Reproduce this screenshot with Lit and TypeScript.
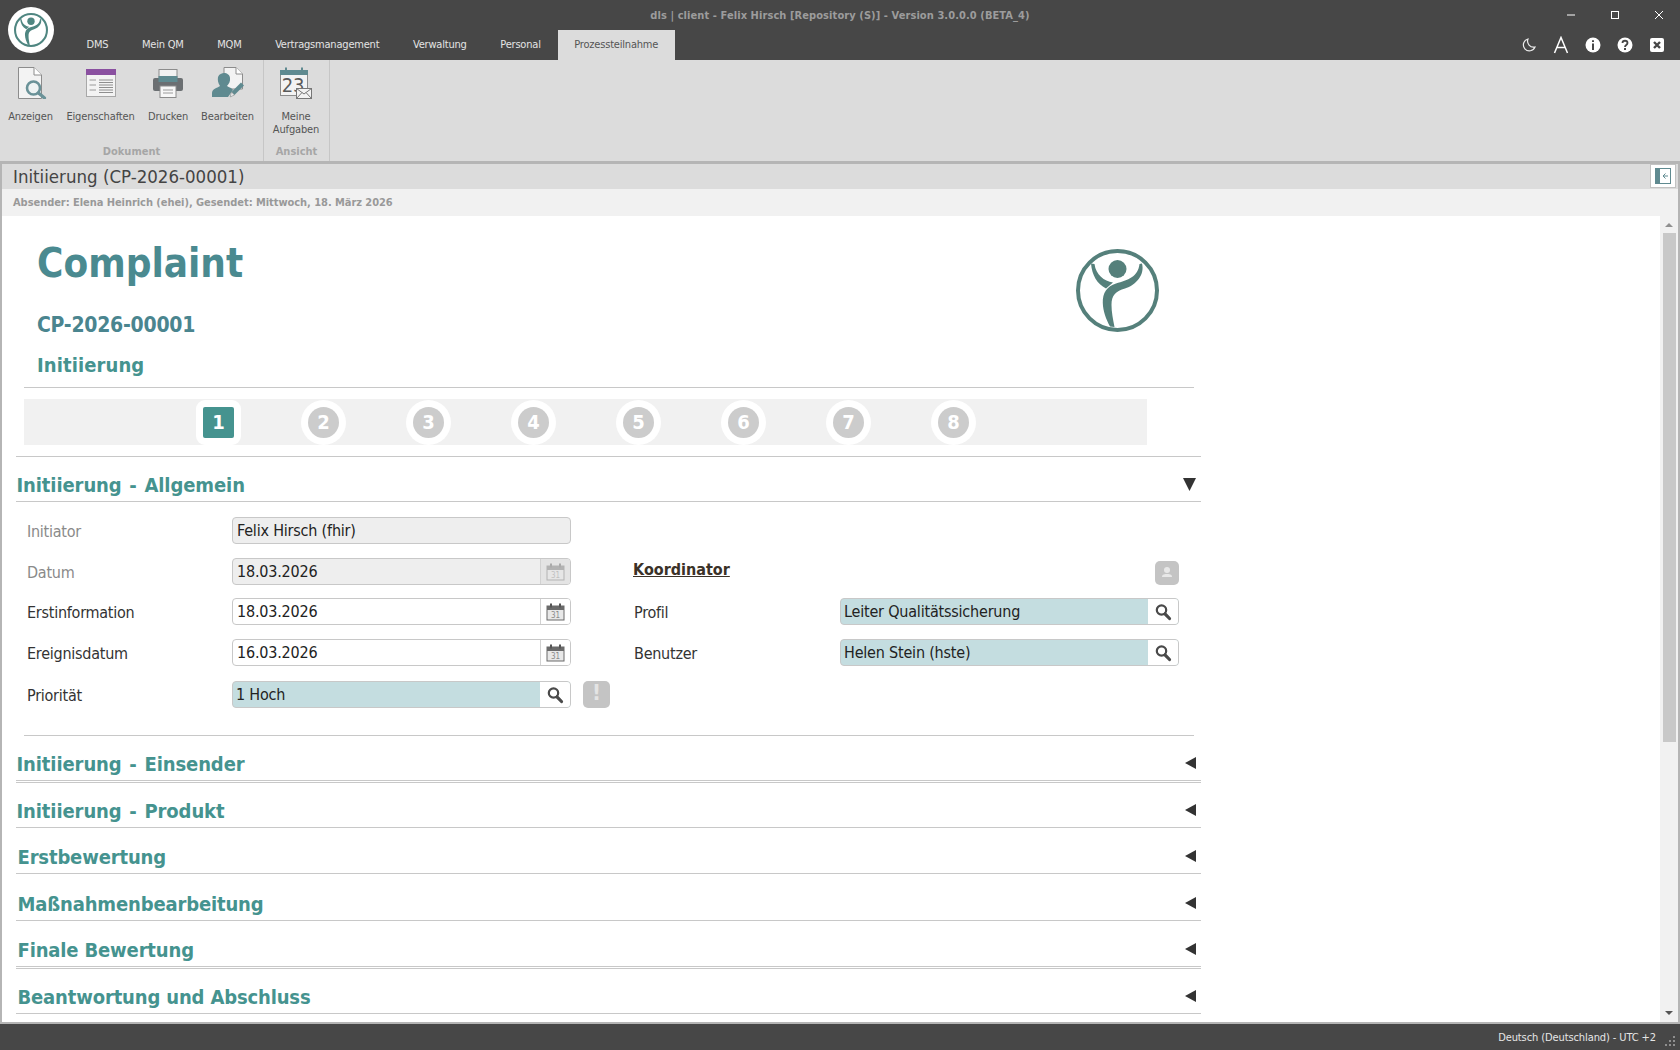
import { LitElement, html, css } from 'lit';
import { customElement } from 'lit/decorators.js';

const logoShape = (ring: string, stroke = 4) => html`
  <svg viewBox="0 0 83 83" width="100%" height="100%">
    <circle cx="41.5" cy="41.5" r="${39.5 - (stroke - 4) / 2}" fill="none" stroke=${ring} stroke-width=${stroke}></circle>
    <circle cx="41.5" cy="20" r="9" fill=${ring}></circle>
    <path fill=${ring} d="M15 14.5C16 26 21 35 30 39.5L37 33.5C28 32 20 26 18.5 15Z"></path>
    <path fill=${ring} d="M66 14.5C69 26 60 36 49 39.5C40 42 35.5 46 35.5 56C35.5 63 37 70 38.5 78L34 77.5C30 70 27 62 26.8 54C26.5 44 31 37 40 34.5C52 31 62 28 63.5 15Z"></path>
  </svg>
`;

const searchIcon = html`
  <svg viewBox="0 0 18 18" width="18" height="18">
    <circle cx="7.5" cy="7" r="4.7" fill="#fff" stroke="#4a4a4a" stroke-width="2.2"></circle>
    <path d="M11 10.8L15.5 15.5" stroke="#4a4a4a" stroke-width="3.2" stroke-linecap="round"></path>
  </svg>
`;

const calIcon = html`
  <svg viewBox="0 0 19 18" width="19" height="18">
    <rect x="1" y="3" width="17" height="14" fill="#e8e8e8" stroke="#6a6a6a"></rect>
    <rect x="1" y="3" width="17" height="4" fill="#6a6a6a"></rect>
    <rect x="4" y="0.5" width="2" height="4" fill="#555"></rect>
    <rect x="13" y="0.5" width="2" height="4" fill="#555"></rect>
    <text x="9.5" y="15" font-size="8" text-anchor="middle" fill="#8a8a8a" font-family="DejaVu Sans Condensed, DejaVu Sans, sans-serif">31</text>
  </svg>
`;

const triLeft = html`<svg viewBox="0 0 11 12" width="11" height="12"><path d="M11 0V12L0 6Z" fill="#333"></path></svg>`;
const triDown = html`<svg class="down" viewBox="0 0 13 13" width="13" height="13"><path d="M0 0H13L6.5 13Z" fill="#333"></path></svg>`;

const ribbonIcons: Record<string, unknown> = {
  view: html`
    <svg viewBox="0 0 32 32" width="32" height="32">
      <path d="M3.5 .5H19L26.5 8V31.5H3.5Z" fill="#f3f3f3" stroke="#8c8c8c"></path>
      <path d="M19 .5V8H26.5" fill="#fff" stroke="#8c8c8c"></path>
      <circle cx="18.500" cy="21" r="6.500" fill="#eef3f3" stroke="#6a9298" stroke-width="2.600"></circle>
      <path d="M23.500 26L29.500 31" stroke="#6a9298" stroke-width="3.200" stroke-linecap="round"></path>
    </svg>`,
  props: html`
    <svg viewBox="0 0 32 32" width="32" height="32">
      <rect x="1.5" y="2.5" width="29" height="27" fill="#f3f3f3" stroke="#a8a8a8"></rect>
      <rect x="1" y="2" width="30" height="6" fill="#8a50a0"></rect>
      <path d="M4.5 13H11M4.5 18H11M4.5 23H11" stroke="#9a9a9a"></path>
      <path d="M14 13H28M14 15.5H28M14 18H28M14 20.5H28M14 23H28M14 25.5H28" stroke="#8e8e8e"></path>
    </svg>`,
  print: html`
    <svg viewBox="0 0 32 32" width="32" height="32">
      <rect x="7" y="2.5" width="18" height="10" fill="#f2f2f2" stroke="#8c8c8c"></rect>
      <path d="M3 11H29Q31 11 31 13V22Q31 24 29 24H3Q1 24 1 22V13Q1 11 3 11Z" fill="#6b6f72"></path>
      <rect x="6.5" y="9" width="19" height="6" fill="#5f8a90"></rect>
      <rect x="8" y="19" width="16" height="11.5" fill="#f7f7f7" stroke="#8c8c8c"></rect>
      <path d="M11 23H21M11 26H21" stroke="#9a9a9a"></path>
    </svg>`,
  edit: html`
    <svg viewBox="0 0 34 32" width="34" height="32">
      <path d="M13 .5H25L31.5 7V22H13Z" fill="#f3f3f3" stroke="#8c8c8c"></path>
      <path d="M25 .5V7H31.5" fill="#fff" stroke="#8c8c8c"></path>
      <path d="M1 30V26C1 22 6 21 9 19C7 16 6.5 13 7 10C8 7 11 6 13 6C16 6 19 8 19 11C19.500 14 18 17 16 19C18 20.500 21 21 22 23L17 30Z" fill="#5f8a90"></path>
      <path d="M19 30L20.500 25L30 15.500L33 18.500L23.500 28Z" fill="#5f8a90"></path>
      <path d="M19 30L20.500 25L23.500 28Z" fill="#e8e8e8" stroke="#8c8c8c" stroke-width=".5"></path>
    </svg>`,
  tasks: html`
    <svg viewBox="0 0 32 32" width="32" height="32">
      <rect x=".5" y="3.500" width="27" height="25" fill="#f3f3f3" stroke="#8c8c8c"></rect>
      <rect x="0" y="3" width="28" height="5" fill="#5f8a90"></rect>
      <rect x="5" y=".5" width="2" height="5" fill="#5f8a90"></rect>
      <rect x="21" y=".5" width="2" height="5" fill="#5f8a90"></rect>
      <text x="13" y="25" font-size="20" text-anchor="middle" fill="#5a5a5a" font-family="DejaVu Sans Condensed, DejaVu Sans, sans-serif">23</text>
      <rect x="16.500" y="21.500" width="15" height="10" fill="#f3f3f3" stroke="#777"></rect>
      <path d="M16.500 21.500L24 27L31.500 21.500M16.500 31.500L22 25.500M31.500 31.500L26 25.500" fill="none" stroke="#777"></path>
    </svg>`,
};

@customElement('app-root')
export class AppRoot extends LitElement {
  static styles = css`
    :host {
      display: flex;
      flex-direction: column;
      width: 1680px;
      height: 1050px;
      overflow: hidden;
      background: #474747;
      font-family: 'DejaVu Sans Condensed', 'DejaVu Sans', sans-serif;
      font-stretch: condensed;
      color: #333;
    }

    /* title bar and tabs */
    .top {
      position: relative;
      height: 60px;
      flex: none;
      background: #474747;
    }
    .logo {
      position: absolute;
      left: 8px;
      top: 7px;
      width: 46px;
      height: 46px;
      padding: 6px;
      box-sizing: border-box;
      border-radius: 50%;
      background: #fff;
    }
    .title-row {
      height: 30px;
      display: grid;
      grid-template-columns: 1fr auto 1fr;
      align-items: center;
    }
    .title {
      grid-column: 2;
      font-size: 11px;
      font-weight: 700;
      color: #9c9c9c;
      letter-spacing: 0.08px;
    }
    .win-ctl {
      grid-column: 3;
      justify-self: end;
      display: flex;
      gap: 28px;
      padding-right: 13px;
    }
    .tab-row {
      height: 30px;
      display: flex;
      justify-content: space-between;
    }
    .tabs {
      display: flex;
      padding-left: 69.7px;
    }
    .tab {
      padding: 0 16.8px;
      font-size: 11px;
      line-height: 30px;
      letter-spacing: -0.2px;
      color: #e4e4e4;
    }
    .tab.active {
      background: #dcdcdc;
      color: #555;
    }
    .tools {
      display: flex;
      gap: 14px;
      padding-right: 14px;
      align-items: center;
    }

    /* ribbon */
    .ribbon {
      height: 101px;
      flex: none;
      display: flex;
      background: #dcdcdc;
    }
    .group {
      display: flex;
      flex-direction: column;
      border-right: 1px solid #c6c6c6;
    }
    .group-items {
      display: flex;
      padding-top: 7px;
    }
    .rib-item {
      display: flex;
      flex-direction: column;
      align-items: center;
      font-size: 11px;
      line-height: 13px;
      letter-spacing: -0.15px;
      color: #555;
      text-align: center;
    }
    .rib-icon {
      height: 32px;
      margin-bottom: 11px;
    }
    .group-label {
      margin-top: auto;
      padding-bottom: 2px;
      text-align: center;
      font-size: 11px;
      line-height: 14px;
      font-weight: 700;
      color: #a6a6a6;
    }

    /* main window */
    .main {
      flex: none;
      height: 863px;
      display: flex;
      flex-direction: column;
      box-sizing: border-box;
      border: solid #b5b5b5;
      border-width: 3px 2px 2px;
      background: #fff;
    }
    .page-head {
      height: 25px;
      flex: none;
      display: flex;
      justify-content: space-between;
      background: #dcdcdc;
    }
    .page-title {
      padding-left: 11px;
      font-size: 18.5px;
      line-height: 25px;
      color: #444;
    }
    .collapse {
      width: 26px;
      height: 24px;
      box-sizing: border-box;
      margin-right: 2px;
      padding: 3px 4px;
      border: 1px solid #c2c2c2;
      background: #fff;
    }
    .sender {
      height: 27px;
      flex: none;
      padding-left: 11px;
      font-size: 11px;
      font-weight: 700;
      line-height: 27px;
      letter-spacing: -0.05px;
      color: #999;
      background: #f1f1f1;
    }
    .body {
      flex: 1;
      min-height: 0;
      display: flex;
    }
    .doc {
      flex: 1;
      min-width: 0;
      overflow: hidden;
    }
    .scroll {
      width: 18px;
      flex: none;
      display: flex;
      flex-direction: column;
      align-items: center;
      padding-top: 7px;
      box-sizing: border-box;
      background: #f1f1f1;
    }
    .arrow-up {
      border: solid transparent;
      border-width: 0 4px 4px;
      border-bottom-color: #8f8f8f;
    }
    .thumb {
      width: 13px;
      height: 509px;
      margin-top: 6px;
      background: #c8c8c8;
    }
    .arrow-down {
      margin-top: auto;
      margin-bottom: 7px;
      border: solid transparent;
      border-width: 4px 4px 0;
      border-top-color: #555;
    }

    /* document head */
    .doc-head {
      width: 1170px;
      margin-left: 22px;
      padding: 23px 0 9px 13px;
      box-sizing: border-box;
      height: 172px;
      display: flex;
      justify-content: space-between;
      border-bottom: 1px solid #c8c8c8;
    }
    .doc-title {
      font-size: 40px;
      line-height: 48px;
      font-weight: 700;
      color: #4a8a90;
    }
    .doc-no {
      margin-top: 25px;
      font-size: 21px;
      line-height: 26px;
      font-weight: 700;
      letter-spacing: -0.25px;
      color: #4a858f;
    }
    .doc-step {
      margin-top: 14px;
      font-size: 20px;
      line-height: 26px;
      font-weight: 700;
      letter-spacing: 0.1px;
      color: #45938f;
    }
    .doc-logo {
      width: 83px;
      height: 83px;
      margin: 10px 35px 0 0;
    }

    /* stepper */
    .steps {
      width: 1123px;
      height: 46px;
      margin: 11px 0 0 22px;
      padding-left: 172px;
      box-sizing: border-box;
      display: flex;
      gap: 60px;
      background: #f1f1f1;
    }
    .step {
      width: 45px;
      height: 45px;
      margin-top: 1px;
      padding: 7px;
      box-sizing: border-box;
      border-radius: 50%;
      background: #fff;
    }
    .step span {
      display: block;
      height: 31px;
      border-radius: 50%;
      background: #ccc;
      color: #fff;
      font-size: 20px;
      font-weight: 700;
      line-height: 31px;
      text-align: center;
    }
    .step.on {
      border-radius: 9px;
    }
    .step.on span {
      border-radius: 2px;
      background: #45938f;
    }

    /* sections */
    .sections {
      width: 1185px;
      margin: 11px 0 0 14px;
      border-top: 1px solid #c8c8c8;
    }
    .sec {
      box-sizing: border-box;
      display: flex;
      justify-content: space-between;
      align-items: flex-end;
      padding: 0 5px 2px 1.5px;
      border-bottom: 1px solid #c8c8c8;
      font-size: 20px;
      font-weight: 700;
      line-height: 28px;
      letter-spacing: -0.15px;
      color: #45938f;
    }
    .sec.dash {
      padding-left: 0.5px;
      letter-spacing: -0.1px;
      word-spacing: 1.6px;
    }
    .sec.double {
      border-bottom: 3px double #c8c8c8;
    }
    .sec svg {
      margin-bottom: 9px;
    }
    .sec svg.down {
      margin-bottom: 8px;
    }
    .form {
      display: flex;
      padding: 15px 0 0 11px;
      height: 233px;
      box-sizing: border-box;
    }
    .form-rule {
      margin: 0 7px 0 8px;
      border-top: 1px solid #c8c8c8;
    }
    .col-left {
      display: grid;
      grid-template-columns: 205px 339px 12px 27px;
      grid-template-rows: 41px 40px 41px 42px 27px;
    }
    .col-right {
      margin-left: 23px;
      padding-top: 41px;
      display: grid;
      grid-template-columns: 207px 339px;
      grid-template-rows: 40px 41px 27px;
    }
    .lbl {
      grid-column: 1;
      font-size: 16px;
      line-height: 27px;
      padding-top: 1px;
      letter-spacing: -0.25px;
      color: #333;
    }
    .lbl.muted {
      color: #8a8a8a;
    }
    .col-right .lbl {
      padding-left: 1px;
    }
    .field {
      grid-column: 2;
      height: 27px;
      box-sizing: border-box;
      display: flex;
      border: 1px solid #c8c8c8;
      border-radius: 4px;
      overflow: hidden;
      background: #fff;
      font-size: 16px;
      line-height: 26px;
      letter-spacing: -0.2px;
      color: #222;
    }
    .field.ro {
      background: #eee;
    }
    .field.lookup {
      background: #c4dde0;
    }
    .val {
      flex: 1;
      padding-left: 4px;
    }
    .lookup .val {
      padding-left: 3px;
    }
    .cell {
      width: 30px;
      box-sizing: border-box;
      display: flex;
      align-items: center;
      justify-content: center;
      border-left: 1px solid #d2d2d2;
      background: #fff;
    }
    .ro .cell {
      background: #e4e4e4;
    }
    .ro .cell svg {
      opacity: 0.4;
    }
    .lookup .cell {
      border-left: none;
    }
    .flag {
      grid-column: 4;
      height: 27px;
      border-radius: 5px;
      background: #c4c4c4;
      color: #e4e4e4;
      font-size: 22px;
      font-weight: 700;
      line-height: 23px;
      text-align: center;
    }
    .coord {
      grid-column: 1;
      font-size: 16px;
      font-weight: 700;
      line-height: 24px;
      text-decoration: underline;
      color: #3b3228;
    }
    .person {
      grid-column: 2;
      justify-self: end;
      width: 24px;
      height: 24px;
      margin-top: 3px;
      border-radius: 5px;
      background: #c4c4c4;
    }

    /* footer */
    .foot {
      flex: 1;
      display: flex;
      justify-content: flex-end;
      align-items: center;
      padding-right: 5px;
      background: #474747;
      font-size: 11px;
      letter-spacing: -0.1px;
      color: #e6e6e6;
    }
    .grip {
      margin: 8px 0 0 9px;
    }
  `;

  private tabs = ['DMS', 'Mein QM', 'MQM', 'Vertragsmanagement', 'Verwaltung', 'Personal'];
  private closed: [string, number, boolean][] = [
    ['Initiierung - Einsender', 47, true],
    ['Initiierung - Produkt', 45, false],
    ['Erstbewertung', 46, false],
    ['Maßnahmenbearbeitung', 47, false],
    ['Finale Bewertung', 48, true],
    ['Beantwortung und Abschluss', 45, false],
  ];

  private ribbonItem(icon: string, label: unknown, width: number) {
    return html`
      <div class="rib-item" style="width:${width}px">
        <div class="rib-icon">${ribbonIcons[icon]}</div>
        <div>${label}</div>
      </div>
    `;
  }

  private field(value: string, kind: string, cell: unknown) {
    return html`
      <div class="field ${kind}">
        <div class="val">${value}</div>
        ${cell ? html`<div class="cell">${cell}</div>` : ''}
      </div>
    `;
  }

  render() {
    return html`
      <div class="top">
        <div class="logo">${logoShape('#4f8681', 5)}</div>
        <div class="title-row">
          <div class="title">dls | client - Felix Hirsch [Repository (S)] - Version 3.0.0.0 (BETA_4)</div>
          <div class="win-ctl">
            <svg viewBox="0 0 16 16" width="16" height="16"><path d="M4 8H12" stroke="#fff" stroke-width="1"></path></svg>
            <svg viewBox="0 0 16 16" width="16" height="16"><rect x="4.500" y="4.500" width="7" height="7" fill="none" stroke="#fff"></rect></svg>
            <svg viewBox="0 0 16 16" width="16" height="16"><path d="M4 4L12 12M12 4L4 12" stroke="#fff"></path></svg>
          </div>
        </div>
        <div class="tab-row">
          <div class="tabs">
            ${this.tabs.map((t) => html`<div class="tab">${t}</div>`)}
            <div class="tab active">Prozessteilnahme</div>
          </div>
          <div class="tools">
            <svg viewBox="0 0 18 18" width="18" height="18"><path d="M8 3A6 6 0 1 0 15 11A6 6 0 0 1 8 3Z" fill="none" stroke="#ececec" stroke-width="1.200"></path></svg>
            <svg viewBox="0 0 18 18" width="18" height="18"><path d="M2.500 17L9 1.500L15.500 17M4.800 11.500H13.200" fill="none" stroke="#fff" stroke-width="1.500"></path></svg>
            <svg viewBox="0 0 18 18" width="18" height="18"><circle cx="9" cy="9" r="7.500" fill="#fff"></circle><path d="M9 4.200V6M9 7.500V14" stroke="#474747" stroke-width="2"></path></svg>
            <svg viewBox="0 0 18 18" width="18" height="18"><circle cx="9" cy="9" r="7.500" fill="#fff"></circle><path d="M6.500 7C6.500 4 11.500 4 11.500 7C11.500 9 9 9 9 11" fill="none" stroke="#474747" stroke-width="1.800"></path><path d="M9 12V14" stroke="#474747" stroke-width="2"></path></svg>
            <svg viewBox="0 0 18 18" width="18" height="18"><rect x="2" y="2" width="14" height="14" rx="2" fill="#fff"></rect><path d="M6 6L12 12M12 6L6 12" stroke="#474747" stroke-width="2.400"></path></svg>
          </div>
        </div>
      </div>

      <div class="ribbon">
        <div class="group" style="width:263px">
          <div class="group-items" style="padding-left:1.500px">
            ${this.ribbonItem('view', 'Anzeigen', 58)}
            ${this.ribbonItem('props', 'Eigenschaften', 82)}
            ${this.ribbonItem('print', 'Drucken', 53)}
            ${this.ribbonItem('edit', 'Bearbeiten', 66)}
          </div>
          <div class="group-label">Dokument</div>
        </div>
        <div class="group" style="width:65px">
          <div class="group-items">
            ${this.ribbonItem('tasks', html`Meine<br />Aufgaben`, 64)}
          </div>
          <div class="group-label">Ansicht</div>
        </div>
      </div>

      <div class="main">
        <div class="page-head">
          <div class="page-title">Initiierung (CP-2026-00001)</div>
          <div class="collapse">
            <svg viewBox="0 0 16 16" width="16" height="16">
              <rect x=".5" y=".5" width="15" height="15" fill="#fff" stroke="#5f8a90"></rect>
              <rect x="0" y="0" width="5" height="16" fill="#5f8a90"></rect>
              <path d="M13 8H8M10.500 5.500L8 8L10.500 10.500" fill="none" stroke="#5f8a90"></path>
            </svg>
          </div>
        </div>
        <div class="sender">Absender: Elena Heinrich (ehei), Gesendet: Mittwoch, 18. März 2026</div>
        <div class="body">
          <div class="doc">
            <div class="doc-head">
              <div>
                <div class="doc-title">Complaint</div>
                <div class="doc-no">CP-2026-00001</div>
                <div class="doc-step">Initiierung</div>
              </div>
              <div class="doc-logo">${logoShape('#55807b')}</div>
            </div>

            <div class="steps">
              ${[1, 2, 3, 4, 5, 6, 7, 8].map(
                (n) => html`<div class="step ${n === 1 ? 'on' : ''}"><span>${n}</span></div>`
              )}
            </div>

            <div class="sections">
              <div class="sec dash" style="height:45px">
                <span>Initiierung - Allgemein</span>${triDown}
              </div>
              <div class="form">
                <div class="col-left">
                  <div class="lbl muted">Initiator</div>
                  ${this.field('Felix Hirsch (fhir)', 'ro', null)}
                  <div class="lbl muted">Datum</div>
                  ${this.field('18.03.2026', 'ro', calIcon)}
                  <div class="lbl">Erstinformation</div>
                  ${this.field('18.03.2026', '', calIcon)}
                  <div class="lbl">Ereignisdatum</div>
                  ${this.field('16.03.2026', '', calIcon)}
                  <div class="lbl">Priorität</div>
                  ${this.field('1 Hoch', 'lookup', searchIcon)}
                  <div class="flag">!</div>
                </div>
                <div class="col-right">
                  <div class="coord">Koordinator</div>
                  <div class="person">
                    <svg viewBox="0 0 24 24" width="24" height="24">
                      <circle cx="12" cy="9" r="3" fill="#e8e8e8"></circle>
                      <path d="M7 16C7 13 10 13 12 13C14 13 17 13 17 16Z" fill="#e8e8e8"></path>
                    </svg>
                  </div>
                  <div class="lbl">Profil</div>
                  ${this.field('Leiter Qualitätssicherung', 'lookup', searchIcon)}
                  <div class="lbl">Benutzer</div>
                  ${this.field('Helen Stein (hste)', 'lookup', searchIcon)}
                </div>
              </div>
              <div class="form-rule"></div>
              ${this.closed.map(
                ([name, h, dbl]) => html`
                  <div class="sec ${dbl ? 'double' : ''} ${name.includes(' - ') ? 'dash' : ''}" style="height:${h}px">
                    <span>${name}</span>${triLeft}
                  </div>
                `
              )}
            </div>
          </div>
          <div class="scroll">
            <div class="arrow-up"></div>
            <div class="thumb"></div>
            <div class="arrow-down"></div>
          </div>
        </div>
      </div>

      <div class="foot">
        <span>Deutsch (Deutschland) - UTC +2</span>
        <svg class="grip" viewBox="0 0 10 10" width="10" height="10" fill="#8f8f8f">
          <rect x="8" y="0" width="2" height="2"></rect>
          <rect x="4" y="4" width="2" height="2"></rect>
          <rect x="8" y="4" width="2" height="2"></rect>
          <rect x="0" y="8" width="2" height="2"></rect>
          <rect x="4" y="8" width="2" height="2"></rect>
          <rect x="8" y="8" width="2" height="2"></rect>
        </svg>
      </div>
    `;
  }
}
